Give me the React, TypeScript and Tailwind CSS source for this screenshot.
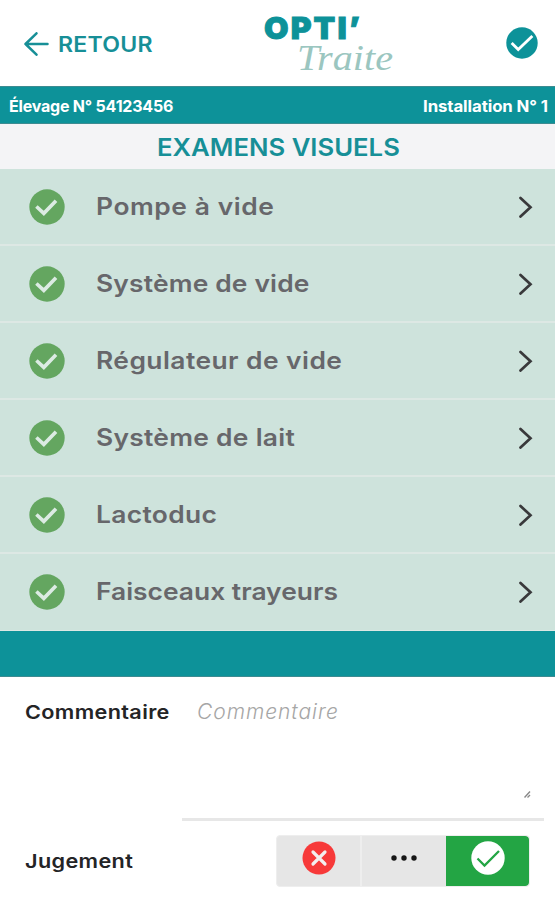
import { useState } from 'react'

type Judgement = 'bad' | 'other' | 'good'

type Exam = {
  id: number
  label: string
  tracking: string
}

const exams: Exam[] = [
  { id: 1, label: 'Pompe à vide', tracking: 'tracking-[0.5px]' },
  { id: 2, label: 'Système de vide', tracking: 'tracking-[0.15px]' },
  { id: 3, label: 'Régulateur de vide', tracking: 'tracking-[0.4px]' },
  { id: 4, label: 'Système de lait', tracking: 'tracking-[0.25px]' },
  { id: 5, label: 'Lactoduc', tracking: 'tracking-[0.3px]' },
  { id: 6, label: 'Faisceaux trayeurs', tracking: 'tracking-[0px]' },
]

export default function App() {
  const [comment, setComment] = useState('')
  const [judgement, setJudgement] = useState<Judgement>('good')

  return (
    <div className="flex h-[900px] w-[555px] flex-col overflow-hidden bg-white font-['Inter',sans-serif]">
      <header className="grid h-[86px] shrink-0 grid-cols-[240px_1fr_49px] items-center">
        <button className="flex items-center gap-[9px] pl-6 pt-px text-[#178f97]">
          <BackArrow />
          <span className="origin-left scale-x-[1.1] pt-px text-[21px] font-semibold leading-none tracking-[0.2px]">RETOUR</span>
        </button>
        <Logo />
        <button aria-label="Valider">
          <CheckBadge className="h-8 w-8" fill="#0d9299" stroke="#fff" path="M6 17 13 24 28 9.5" strokeWidth={3} />
        </button>
      </header>

      <div className="flex h-[38px] shrink-0 items-center justify-between border-y border-[#3d8b91] bg-[#0d9299] pl-[9px] pr-[7px] pt-px text-[16px] font-bold text-white">
        <span className="tracking-[-0.2px]">Élevage N° 54123456</span>
        <span className="origin-right scale-x-[1.05] tracking-[-0.1px]">Installation N° 1</span>
      </div>

      <h1 className="flex h-[45px] shrink-0 items-center justify-center bg-[#f4f4f6] pl-px pt-[2px] text-[24px] font-semibold text-[#178f97]">
        <span className="scale-x-[1.07]">EXAMENS VISUELS</span>
      </h1>

      <ul className="shrink-0">
        {exams.map((exam) => (
          <li key={exam.id} className="flex h-[77px] items-center border-b-2 border-[#dde8e4] bg-[#cee3dc] pl-[29px] pr-[22px] last:border-b">
            <CheckBadge className="h-9 w-9" fill="#64a660" stroke="#dcebe3" path="M7 16.5 14 23 25.5 11" strokeWidth={3.4} />
            <span className="ml-[31px] flex-1 text-[24px] font-semibold text-[#67676b]">
              <span className={`inline-block origin-left scale-x-[1.1] ${exam.tracking}`}>{exam.label}</span>
            </span>
            <Chevron />
          </li>
        ))}
      </ul>

      <div className="h-[46px] shrink-0 border-b border-[#3d8b91] bg-[#0d9299]" />

      <div className="flex h-[144px] shrink-0 pl-[25px] pr-[11px]">
        <label htmlFor="comment" className="w-[157px] pt-[22px] text-[19px] font-semibold text-[#242426]">
          <span className="inline-block origin-left scale-x-[1.14] tracking-[0.3px]">Commentaire</span>
        </label>
        <div className="relative flex-1 border-b-[3px] border-[#e7e7e7]">
          <textarea
            id="comment"
            value={comment}
            onChange={(e) => setComment(e.target.value)}
            placeholder="Commentaire"
            className="block h-[125px] w-full resize-none bg-transparent pl-[15px] pt-[19px] text-[21px] font-light italic tracking-[0.95px] outline-none placeholder:text-[#a6a6a6]"
          />
          <svg viewBox="0 0 7 7" className="absolute bottom-[20px] right-[13px] h-[7px] w-[7px]" stroke="#888" strokeWidth="1.4">
            <path d="M.5 6.5 6 .5M3.5 6.5 6 4" />
          </svg>
        </div>
      </div>

      <div className="flex h-[79px] items-center justify-between pl-[25px] pr-[25px]">
        <span className="origin-left scale-x-[1.14] pt-[3px] text-[19px] font-semibold tracking-[0.3px] text-[#242426]">Jugement</span>
        <div className="flex h-[52px] w-[254px] overflow-hidden rounded border border-[#eee] bg-[#e6e6e6]">
          <button onClick={() => setJudgement('bad')} aria-label="Non conforme" className={`flex w-[85px] justify-center border-r-2 border-[#eee] pt-[5px] ${judgement === 'bad' ? 'bg-gray-300' : ''}`}>
            <svg viewBox="0 0 34 34" className="h-[34px] w-[34px]" fill="none">
              <circle cx="17" cy="17" r="16.5" fill="#f73939" />
              <path d="m11 11 12 12m0-12-12 12" stroke="#f3eeee" strokeWidth="3.2" strokeLinecap="round" />
            </svg>
          </button>
          <button onClick={() => setJudgement('other')} aria-label="Autre" className={`flex w-[84px] justify-center pt-[19px] ${judgement === 'other' ? 'bg-gray-300' : ''}`}>
            <svg viewBox="0 0 26 6" className="h-[6px] w-[26px]" fill="#161616">
              <circle cx="3" cy="3" r="2.7" />
              <circle cx="13" cy="3" r="2.7" />
              <circle cx="23" cy="3" r="2.7" />
            </svg>
          </button>
          <button onClick={() => setJudgement('good')} aria-label="Conforme" className={`flex flex-1 justify-center rounded-r pt-[5px] ${judgement === 'good' ? 'bg-[#23a544]' : ''}`}>
            <CheckBadge className="h-[34px] w-[34px]" fill="#fff" stroke="#23a544" path="M6.5 17.5 13.5 24.5 28 10" strokeWidth={2.3} />
          </button>
        </div>
      </div>
    </div>
  )
}

function Logo() {
  return (
    <svg viewBox="0 0 266 86" className="h-[86px] w-[266px]">
      <text x="24" y="38.5" textLength="98" lengthAdjust="spacingAndGlyphs" fill="#0d9299" stroke="#0d9299" strokeWidth="0.9" className="font-['Inter',sans-serif] text-[30px] font-black tracking-[2px]">
        OPTI’
      </text>
      <text x="57" y="70" textLength="96" lengthAdjust="spacingAndGlyphs" fill="#9bc6c0" className="font-['Liberation_Serif',serif] text-[36px] italic">
        Traite
      </text>
    </svg>
  )
}

function BackArrow() {
  return (
    <svg viewBox="0 0 25 24" className="h-6 w-[25px]" fill="none" stroke="currentColor" strokeWidth="2.5" strokeLinecap="round" strokeLinejoin="round">
      <path d="M23.5 12H1.5M12.5 1.3 1.5 12l11 10.7" />
    </svg>
  )
}

function Chevron() {
  return (
    <svg viewBox="0 0 15 22" className="h-[22px] w-[15px]" fill="none" stroke="#39393b" strokeWidth="2.7" strokeLinecap="round">
      <path d="m2.5 2 10 9.3-10 9.3" />
    </svg>
  )
}

function CheckBadge({ className, fill, stroke, path, strokeWidth }: { className: string; fill: string; stroke: string; path: string; strokeWidth: number }) {
  return (
    <svg viewBox="0 0 34 34" className={className} fill="none">
      <circle cx="17" cy="17" r="16.7" fill={fill} />
      <path d={path} stroke={stroke} strokeWidth={strokeWidth} />
    </svg>
  )
}
